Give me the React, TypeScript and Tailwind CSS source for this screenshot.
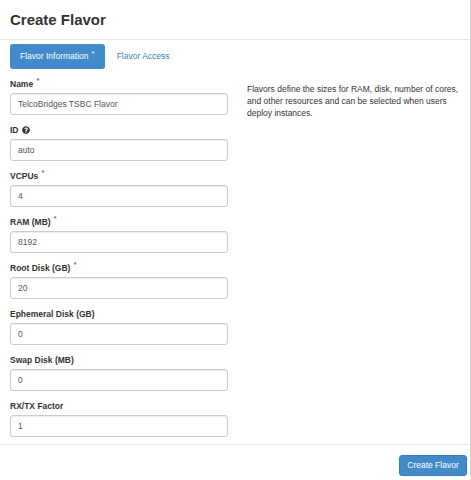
import React from "react";
import { FaQuestionCircle } from "react-icons/fa";

const fields = [
  { label: "Name", value: "TelcoBridges TSBC Flavor", required: true },
  { label: "ID", value: "auto", help: true },
  { label: "VCPUs", value: "4", required: true },
  { label: "RAM (MB)", value: "8192", required: true },
  { label: "Root Disk (GB)", value: "20", required: true },
  { label: "Ephemeral Disk (GB)", value: "0" },
  { label: "Swap Disk (MB)", value: "0" },
  { label: "RX/TX Factor", value: "1" },
];

const App = () => {
  return (
    <div
      className="w-[471px] h-[480px] bg-white border-r border-[#d4d4d4] text-[#333] overflow-hidden"
      style={{ fontFamily: '"Liberation Sans", Arial, sans-serif' }}
    >
      {/* Header */}
      <div className="h-[40px] px-[10px] flex items-center border-b border-[#e5e5e5]">
        <h1 className="text-[15px] font-bold text-[#333] pt-[1px]">Create Flavor</h1>
      </div>

      {/* Tabs */}
      <div className="flex items-center mt-[4px] px-[10px] h-[25px]">
        <div className="h-[25px] px-[10px] flex items-center bg-[#428bca] text-white rounded-[3px] text-[8.5px]">
          Flavor Information
          <span className="relative -top-[3px] ml-[3px] text-[8px]">*</span>
        </div>
        <div className="h-[25px] px-[12px] flex items-center text-[#3a7fc1] text-[8.5px]">
          Flavor Access
        </div>
      </div>

      {/* Body */}
      <div className="flex px-[10px] mt-[9px] h-[366px]">
        <form className="w-[218px] flex flex-col">
          {fields.map((f) => (
            <div key={f.label} className="mb-[9px]">
              <label className="flex items-center h-[12px] text-[8.5px] font-bold text-[#333] mb-[3px]">
                {f.label}
                {f.required && (
                  <span className="relative -top-[3px] ml-[3px] text-[8px] text-[#428bca]">*</span>
                )}
                {f.help && <FaQuestionCircle className="ml-[3px] text-[#333]" size={8} />}
              </label>
              <input
                type="text"
                defaultValue={f.value}
                className="block w-full h-[22px] px-[7px] border border-[#ccc] rounded-[3px] text-[8.5px] text-[#555] shadow-[inset_0_1px_1px_rgba(0,0,0,0.075)] outline-none"
                style={{ fontFamily: '"Liberation Sans", Arial, sans-serif' }}
              />
            </div>
          ))}
        </form>
        <div className="ml-[19px] pt-[5px] text-[8.5px] leading-[12px] text-[#333]">
          Flavors define the sizes for RAM, disk, number of cores,
          <br />
          and other resources and can be selected when users
          <br />
          deploy instances.
        </div>
      </div>

      {/* Footer */}
      <div className="border-t border-[#e5e5e5] flex justify-end pt-[10px] pr-[3px]">
        <button className="h-[21px] w-[68px] bg-[#428bca] text-white text-[8.5px] rounded-[3px] border border-[#3a7cb8]">
          Create Flavor
        </button>
      </div>
    </div>
  );
};

export default App;
